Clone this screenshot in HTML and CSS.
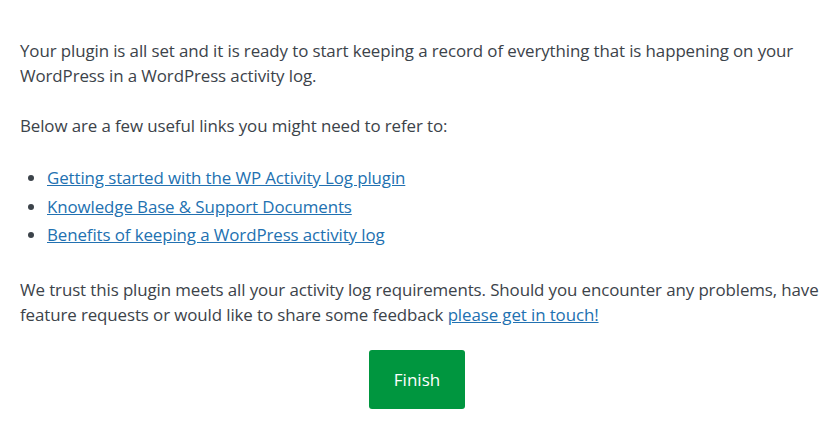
FILE: index.html
```html
<!DOCTYPE html>
<html>
<head>
<meta charset="utf-8">
<link rel="stylesheet" href="styles.css">
</head>
<body>
<div class="content">
  <p>Your plugin is all set and it is ready to start keeping a record of everything that is happening on your WordPress in a WordPress activity log.</p>
  <p>Below are a few useful links you might need to refer to:</p>
  <ul class="links">
    <li><a href="#">Getting started with the WP Activity Log plugin</a></li>
    <li><a href="#">Knowledge Base &amp; Support Documents</a></li>
    <li><a href="#">Benefits of keeping a WordPress activity log</a></li>
  </ul>
  <p>We trust this plugin meets all your activity log requirements. Should you encounter any problems, have feature requests or would like to share some feedback <a href="#">please get in touch!</a></p>
  <div class="actions">
    <button class="finish">Finish</button>
  </div>
</div>
</body>
</html>
```
FILE: styles.css
```css
html, body {
  margin: 0;
  padding: 0;
  background: #fff;
}
body {
  font-family: "Open Sans", "Noto Sans", sans-serif;
  font-size: 16.9px;
  letter-spacing: -0.1px;
  color: #3c434a;
}
.content {
  padding: 38px 18px 0 20px;
  width: 800px;
}
p {
  margin: 0 0 25px 0;
  line-height: 25px;
}
a {
  color: #2271b1;
  text-decoration: underline;
}
.links {
  margin: 27px 0 30px 0;
  padding: 0 0 0 27px;
}
.links li {
  line-height: 25px;
  margin-bottom: 3.5px;
}
.actions {
  display: flex;
  justify-content: center;
  margin-top: -2px;
}
.finish {
  width: 96px;
  height: 59px;
  background: #00963f;
  color: #fff;
  border: none;
  border-radius: 3px;
  font-family: inherit;
  font-size: 17px;
  letter-spacing: 0;
  margin-right: 6px;
}
```
